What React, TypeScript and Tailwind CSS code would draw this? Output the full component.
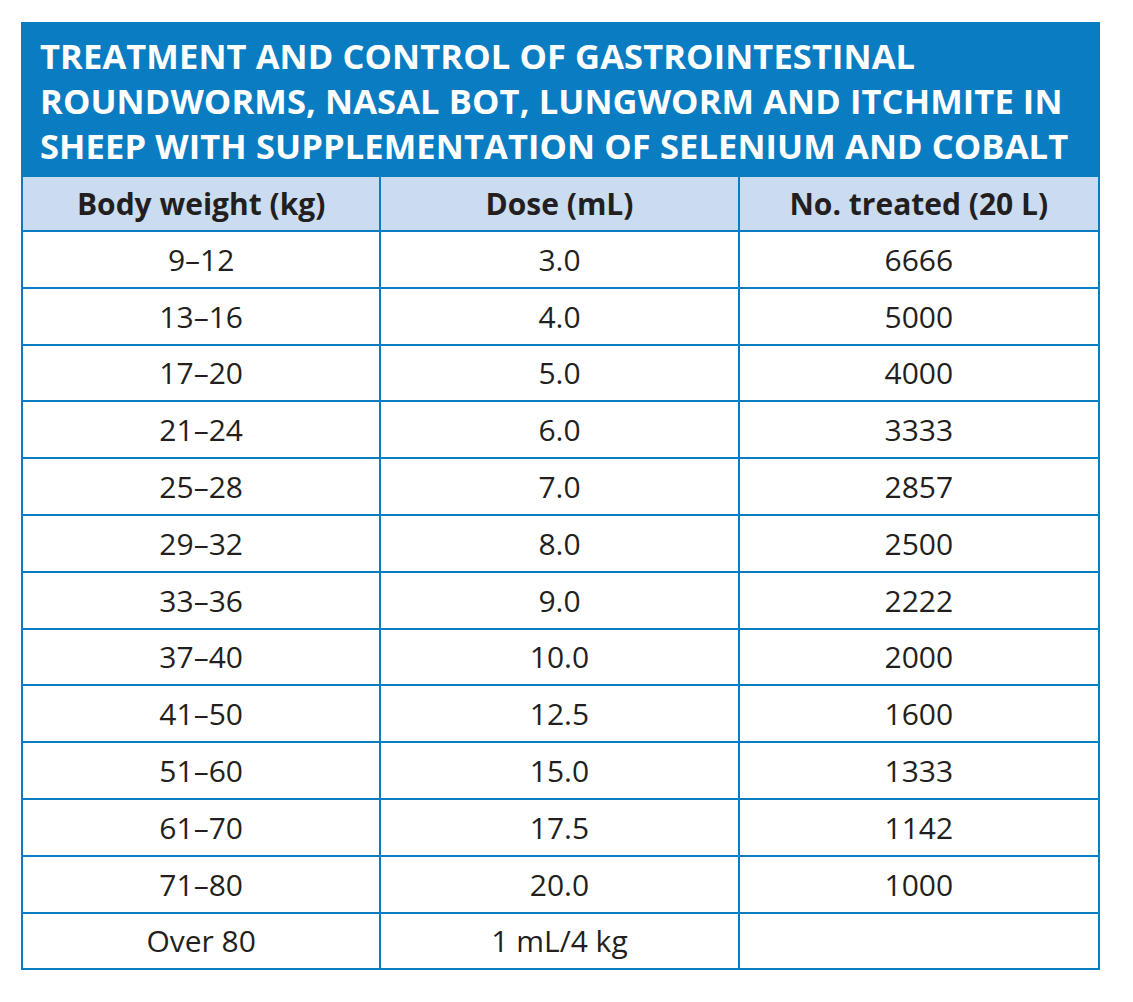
import React from "react";

const rows: [string, string, string][] = [
  ["9–12", "3.0", "6666"],
  ["13–16", "4.0", "5000"],
  ["17–20", "5.0", "4000"],
  ["21–24", "6.0", "3333"],
  ["25–28", "7.0", "2857"],
  ["29–32", "8.0", "2500"],
  ["33–36", "9.0", "2222"],
  ["37–40", "10.0", "2000"],
  ["41–50", "12.5", "1600"],
  ["51–60", "15.0", "1333"],
  ["61–70", "17.5", "1142"],
  ["71–80", "20.0", "1000"],
  ["Over 80", "1 mL/4 kg", ""],
];

export default function App() {
  return (
    <div className="bg-white w-[1133px] h-[1002px] pt-[22px] pl-[21px]" style={{ fontFamily: '"Open Sans", "Noto Sans", sans-serif' }}>
      <div className="w-[1079px] border-2 border-[#0a7cc2] text-[#231f20]">
        <div className="bg-[#0a7cc2] h-[153px] pl-[17px] pt-[9px] text-white font-bold text-[34.5px] leading-[45px] whitespace-nowrap tracking-[0.1px]">
          TREATMENT AND CONTROL OF GASTROINTESTINAL
          <br />
          ROUNDWORMS, NASAL BOT, LUNGWORM AND ITCHMITE IN
          <br />
          SHEEP WITH SUPPLEMENTATION OF SELENIUM AND COBALT
        </div>
        <div className="grid grid-cols-3 bg-[#cbdcf0] h-[55px] border-b-2 border-[#0a7cc2] font-bold text-[30px]">
          <div className="flex items-center justify-center border-r-2 border-[#0a7cc2]">Body weight (kg)</div>
          <div className="flex items-center justify-center border-r-2 border-[#0a7cc2]">Dose (mL)</div>
          <div className="flex items-center justify-center">No. treated (20 L)</div>
        </div>
        {rows.map((r, i) => (
          <div
            key={i}
            className={
              "grid grid-cols-3 text-[30px] " +
              (i < rows.length - 1 ? "h-[56.8px] border-b-2 border-[#0a7cc2]" : "h-[54.8px]")
            }
          >
            <div className="flex items-center justify-center border-r-2 border-[#0a7cc2]">{r[0]}</div>
            <div className="flex items-center justify-center border-r-2 border-[#0a7cc2]">{r[1]}</div>
            <div className="flex items-center justify-center">{r[2]}</div>
          </div>
        ))}
      </div>
    </div>
  );
}
